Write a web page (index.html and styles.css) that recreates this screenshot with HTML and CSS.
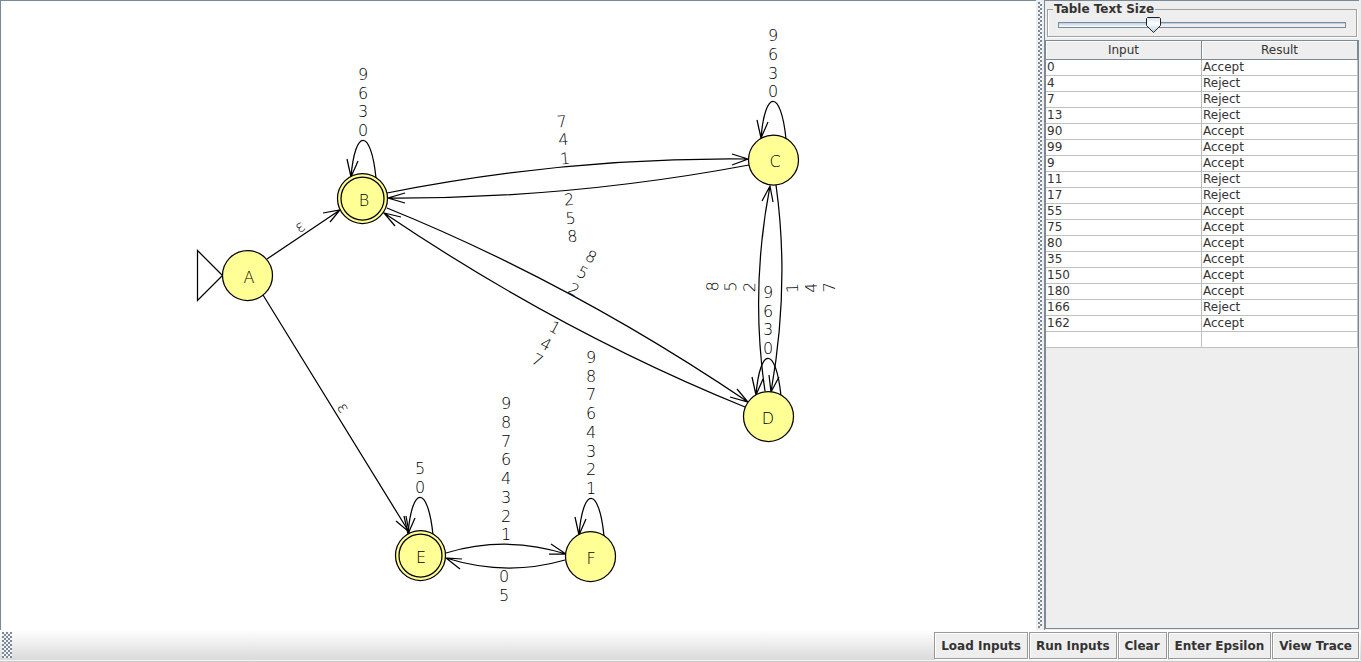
FILE: index.html
```html
<!DOCTYPE html>
<html lang="en">
<head>
<meta charset="utf-8">
<title>Multiple Run</title>
<link rel="stylesheet" href="styles.css">
</head>
<body>
<main class="split">
  <section class="canvas" aria-label="Automaton">
    <svg class="graph">
      <defs>
        <g id="loop">
          <path d="M13 -21C8 -71 -8 -71 -12 -22M-16 -40L-12 -22L-5 -38"/>
        </g>
      </defs>
      <g class="edges">
        <path d="M197.500 250.500L222.500 275.500L197.500 300.500Z"/>
        <path d="M267 259L340 210M323 213L340 210L330 222"/>
        <path d="M263 295L409 532M396 521L409 532L406 516"/>
        <path d="M387 193Q568 157 748 159M732 154L748 159L732 165"/>
        <path d="M749 165Q568 199 388 198M405 193L388 198L405 203"/>
        <path d="M387 208Q572 283 748 402M737 389L748 402L730 397"/>
        <path d="M745 407Q560 332 384 213M395 226L384 213L401 217"/>
        <path d="M765 391Q750 290 770 186M762 201L770 186L773 202"/>
        <path d="M776 185Q790 285 771 392M769 375L771 392L779 377"/>
        <path d="M446 553Q506 535 566 554M551 544L566 554L549 554"/>
        <path d="M565 560Q506 577 446 558M462 559L446 558L460 569"/>
        <use href="#loop" x="363" y="199"/>
        <use href="#loop" x="773" y="160"/>
        <use href="#loop" x="768" y="417"/>
        <use href="#loop" x="420" y="556"/>
        <use href="#loop" x="591" y="557"/>
      </g>
      <g class="states">
        <circle cx="247.500" cy="275.500" r="25"/>
        <circle cx="362.500" cy="198.500" r="25"/>
        <circle cx="362.500" cy="198.500" r="21.500"/>
        <circle cx="773.500" cy="160" r="25"/>
        <circle cx="768.500" cy="416.500" r="25"/>
        <circle cx="420.500" cy="555.500" r="25"/>
        <circle cx="420.500" cy="555.500" r="21.500"/>
        <circle cx="590.500" cy="556.500" r="25"/>
      </g>
      <g class="labels">
        <text x="249" y="283">A</text>
        <text x="364" y="206">B</text>
        <text x="775" y="167">C</text>
        <text x="768" y="424">D</text>
        <text x="421" y="563">E</text>
        <text x="591" y="564">F</text>
        <text x="363 363 363 363" y="80 99 117 136">9630</text>
        <text x="773 773 773 773" y="41 60 79 97">9630</text>
        <text x="768 768 768 768" y="298 317 335 354">9630</text>
        <text x="420 420" y="474 493">50</text>
        <text x="591 591 591 591 591 591 591 591" y="363 382 400 419 438 457 475 494">98764321</text>
        <text x="506 506 506 506 506 506 506 506" y="409 428 447 465 484 503 522 540">98764321</text>
        <text x="504 504" y="582 601">05</text>
        <text transform="translate(565 158) rotate(-5)" x="0 0 0" y="-31 -13 6">741</text>
        <text transform="translate(569 199) rotate(-5)" x="0 0 0" y="6 25 43">258</text>
        <text transform="translate(574 289) rotate(28)" x="0 0 0" y="-31 -13 6">852</text>
        <text transform="translate(555 327) rotate(28)" x="0 0 0" y="6 25 43">147</text>
        <text transform="translate(749 287) rotate(-89)" x="0 0 0" y="-31 -13 6">852</text>
        <text transform="translate(792 288) rotate(-91)" x="0 0 0" y="6 25 43">147</text>
        <text transform="translate(300 227) rotate(-34)" x="0" y="5">ε</text>
        <text transform="translate(343 408) rotate(58)" x="0" y="5">ε</text>
      </g>
    </svg>
  </section>
  <div class="divider"></div>
  <aside class="side">
    <fieldset class="size">
      <legend><label for="size">Table Text Size</label></legend>
      <input id="size" class="slider" type="range" min="0" max="100" value="32">
    </fieldset>
    <div class="scroll">
      <table class="runs">
        <thead><tr><th>Input</th><th>Result</th></tr></thead>
        <tbody>
          <tr><td>0</td><td>Accept</td></tr>
          <tr><td>4</td><td>Reject</td></tr>
          <tr><td>7</td><td>Reject</td></tr>
          <tr><td>13</td><td>Reject</td></tr>
          <tr><td>90</td><td>Accept</td></tr>
          <tr><td>99</td><td>Accept</td></tr>
          <tr><td>9</td><td>Accept</td></tr>
          <tr><td>11</td><td>Reject</td></tr>
          <tr><td>17</td><td>Reject</td></tr>
          <tr><td>55</td><td>Accept</td></tr>
          <tr><td>75</td><td>Accept</td></tr>
          <tr><td>80</td><td>Accept</td></tr>
          <tr><td>35</td><td>Accept</td></tr>
          <tr><td>150</td><td>Accept</td></tr>
          <tr><td>180</td><td>Accept</td></tr>
          <tr><td>166</td><td>Reject</td></tr>
          <tr><td>162</td><td>Accept</td></tr>
          <tr><td></td><td></td></tr>
        </tbody>
      </table>
    </div>
  </aside>
</main>
<footer class="toolbar">
  <div class="grip"></div>
  <button type="button">Load Inputs</button>
  <button type="button">Run Inputs</button>
  <button type="button">Clear</button>
  <button type="button">Enter Epsilon</button>
  <button type="button">View Trace</button>
</footer>
</body>
</html>
```
FILE: styles.css
```css
* { box-sizing: border-box; }

body {
  margin: 0;
  height: 100vh;
  display: flex;
  flex-direction: column;
  background: #eeeeee;
  color: #333333;
  font: 12px/16px "DejaVu Sans", sans-serif;
}

.split {
  flex: 1;
  min-height: 0;
  display: flex;
  padding-right: 2px;
}

.canvas {
  flex: 1;
  min-width: 0;
  overflow: hidden;
  background: #ffffff;
  border: solid #7a8a99;
  border-width: 1px 0 0 1px;
}

.graph {
  display: block;
  width: 100%;
  height: 100%;
  margin: -1px 0 0 -1px;
  overflow: visible;
}

.edges { fill: none; stroke: #000000; stroke-width: 1.25px; }
.states { fill: #ffff96; stroke: #000000; stroke-width: 1.25px; }

.labels {
  fill: #000000;
  font-size: 16px;
  font-weight: 200;
  font-family: "DejaVu Sans Light", "DejaVu Sans", sans-serif;
  text-anchor: middle;
}

.divider,
.grip {
  background-color: #f4f4f4;
  background-image:
    radial-gradient(circle at 1px 1px, #7a8a99 0 1px, transparent 1px),
    radial-gradient(circle at 3px 3px, #7a8a99 0 1px, transparent 1px);
  background-size: 4px 4px;
}

.divider {
  width: 8px;
  border: solid #eeeeee;
  border-width: 2px 2px 2px 2px;
}

.side {
  width: 315px;
  display: flex;
  flex-direction: column;
  border: solid #7a8a99;
  border-width: 1px 0 0 1px;
}

.size {
  margin: 1px 2px 3px;
  padding: 0 10px 2px;
  border: 1px solid #a0a0a0;
  min-width: 0;
  box-shadow: inset 1px 0 #ffffff, 1px 1px #ffffff;
}

.size legend {
  margin-left: -5px;
  padding: 0 1px;
  font-weight: bold;
  line-height: 14px;
}

.slider {
  display: block;
  width: 100%;
  height: 18px;
  margin: 0;
  appearance: none;
  background: none;
}

.slider::-webkit-slider-runnable-track {
  height: 6px;
  border: 1px solid #7a8a99;
  background: linear-gradient(#b8cfe5, #ffffff) left / 32% 100% no-repeat, linear-gradient(#b8cfe5 0 1px, #eeeeee 1px);
}

.slider::-webkit-slider-thumb {
  appearance: none;
  width: 15px;
  height: 16px;
  margin-top: -6px;
  border: 0;
  background: url("data:image/svg+xml,%3Csvg xmlns='http://www.w3.org/2000/svg' width='15' height='16'%3E%3Cdefs%3E%3ClinearGradient id='g' x2='0' y2='1'%3E%3Cstop stop-color='%23d4e2f2'/%3E%3Cstop offset='.4' stop-color='white'/%3E%3Cstop offset='1' stop-color='%23b8cfe5'/%3E%3C/linearGradient%3E%3C/defs%3E%3Cpath d='M1.500 .5H13.500L14.500 1.500V8.500L7.500 15.500L.5 8.500V1.500Z' fill='url(%23g)' stroke='%23222222'/%3E%3C/svg%3E") no-repeat;
}

.scroll {
  flex: 1;
  min-height: 0;
  overflow: hidden;
  border: 1px solid #7a8a99;
  margin-bottom: 1px;
}

.runs {
  width: 100%;
  table-layout: fixed;
  border-collapse: separate;
  border-spacing: 0;
}

.runs th {
  height: 19px;
  padding: 0;
  font-weight: normal;
  border: solid #7a8a99;
  border-width: 0 1px 1px 0;
  box-shadow: inset 1px 1px #ffffff;
}

.runs td {
  height: 16px;
  padding: 0 1px;
  line-height: 15px;
  background: #ffffff;
  border: solid #c0c0c0;
  border-width: 0 1px 1px 0;
}

.toolbar {
  height: 32px;
  display: flex;
  gap: 1px;
  padding: 2px 2px 3px;
  background: linear-gradient(#ffffff, #dadada 30px, #f4f4f4 30px, #f4f4f4 31px, #c8c8c8 31px);
}

.grip {
  width: 10px;
  height: 26px;
  margin-right: auto;
}

.toolbar button {
  padding: 0 6px;
  font: bold 12px/16px "DejaVu Sans", sans-serif;
  color: #333333;
  background: #eeeeee;
  border: 1px solid #999999;
  border-radius: 0;
  box-shadow: inset 1px 1px #ffffff, 1px 1px #ffffff;
}
```
